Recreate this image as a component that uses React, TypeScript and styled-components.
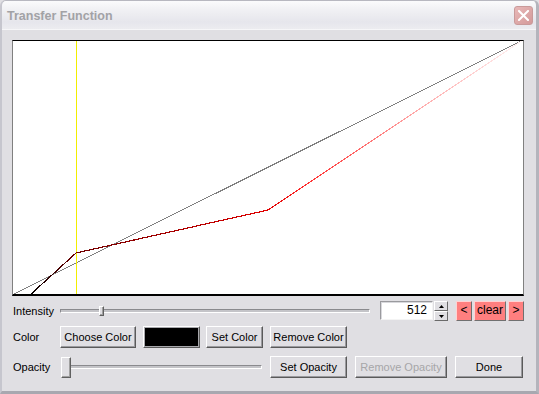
import React from "react";
import styled, { createGlobalStyle } from "styled-components";

const Global = createGlobalStyle`
  html, body { margin: 0; padding: 0; background: #e0dfe3; overflow: hidden; }
  body { width: 539px; height: 394px; font-family: "Liberation Sans", Arial, sans-serif; }
`;

const Window = styled.div`
  width: 539px;
  height: 394px;
  box-sizing: border-box;
  display: flex;
  flex-direction: column;
  background: #e0dfe3;
  border-left: 2px solid #c6c6ce;
  border-right: 3px solid #b4b4bc;
  border-bottom: 3px solid #a8a8b0;
  border-top: 1px solid #b8b8c0;
  border-radius: 6px 6px 0 0;
  overflow: hidden;
`;

const TitleBar = styled.div`
  height: 28px;
  flex: none;
  display: flex;
  align-items: center;
  justify-content: space-between;
  padding: 0 3px 0 5px;
  background: linear-gradient(#fbfbfc 0%, #f1f1f4 30%, #e6e6ec 75%, #ececf0 100%);
  border-bottom: 1px solid #f6f6f8;
`;

const Title = styled.span`
  font-family: "Liberation Sans", Arial, sans-serif;
  font-weight: bold;
  font-size: 12.5px;
  color: #a2a2a6;
  padding-top: 2px;
`;

const CloseButton = styled.div`
  width: 19px;
  height: 19px;
  box-sizing: border-box;
  border: 1px solid #c99a9a;
  border-radius: 3px;
  background: linear-gradient(135deg, #e8b8b8, #d49a9a);
  display: flex;
  align-items: center;
  justify-content: center;
  margin-top: 1px;
`;

const Body = styled.div`
  flex: 1;
  display: flex;
  flex-direction: column;
  padding: 10px 0 0 10px;
`;

const Plot = styled.div`
  width: 512px;
  height: 256px;
  box-sizing: border-box;
  background: #fff;
  border-top: 1px solid #000;
  border-bottom: 2px solid #000;
  border-left: 1px solid #808080;
  border-right: 1px solid #808080;
  overflow: hidden;
`;

const Row = styled.div<{ $h: number; $mt: number }>`
  display: flex;
  align-items: center;
  height: ${(p) => p.$h}px;
  margin-top: ${(p) => p.$mt}px;
`;

const Label = styled.span`
  width: 48px;
  flex: none;
  padding-left: 1px;
  box-sizing: border-box;
  font-size: 11px;
  color: #000;
`;

const Gap = styled.div<{ $w: number }>`
  width: ${(p) => p.$w}px;
  flex: none;
`;

const SliderBox = styled.div<{ $w: number; $h: number }>`
  position: relative;
  width: ${(p) => p.$w}px;
  height: ${(p) => p.$h}px;
  flex: none;
`;

const Track = styled.div<{ $l: number; $r: number }>`
  position: absolute;
  left: ${(p) => p.$l}px;
  right: ${(p) => p.$r}px;
  top: 50%;
  margin-top: -2px;
  height: 4px;
  box-sizing: border-box;
  border-top: 1px solid #8a8a8e;
  border-left: 1px solid #8a8a8e;
  border-bottom: 1px solid #ffffff;
  border-right: 1px solid #ffffff;
  background: #c4c4c8;
`;

const Thumb = styled.div<{ $w: number; $h: number }>`
  position: absolute;
  top: 50%;
  width: ${(p) => p.$w}px;
  height: ${(p) => p.$h}px;
  margin-top: ${(p) => -p.$h / 2}px;
  box-sizing: border-box;
  background: #e0dfe3;
  border-top: 1px solid #ffffff;
  border-left: 1px solid #ffffff;
  border-right: 1px solid #606060;
  border-bottom: 1px solid #606060;
  box-shadow: inset -1px -1px #a0a0a0;
`;

const Button = styled.button<{ $w: number; $disabled?: boolean }>`
  width: ${(p) => p.$w}px;
  height: 22px;
  flex: none;
  box-sizing: border-box;
  padding: 0;
  margin: 0;
  font-family: "Liberation Sans", Arial, sans-serif;
  font-size: 11px;
  color: ${(p) => (p.$disabled ? "#a6a6a8" : "#000")};
  background: #e0dfe3;
  border-style: solid;
  border-width: 1px;
  border-color: #fff #5a5a5a #5a5a5a #fff;
  box-shadow: inset -1px -1px #9a9a9e;
  outline: none;
  display: flex;
  align-items: center;
  justify-content: center;
`;

const RedButton = styled.button<{ $w: number }>`
  width: ${(p) => p.$w}px;
  height: 20px;
  flex: none;
  box-sizing: border-box;
  padding: 0 0 1px 0;
  margin: 0;
  font-family: "Liberation Sans", Arial, sans-serif;
  font-size: 12px;
  color: #000;
  background: #ff7f7f;
  border-style: solid;
  border-width: 1px;
  border-color: #ffd2d2 #707070 #707070 #ffd2d2;
  outline: none;
  display: flex;
  align-items: center;
  justify-content: center;
`;

const Swatch = styled.div`
  width: 57px;
  height: 22px;
  flex: none;
  box-sizing: border-box;
  border-style: solid;
  border-width: 1px;
  border-color: #fff #5a5a5a #5a5a5a #fff;
  padding: 1px;
  background: #a8a8ac;
  display: flex;
`;

const SwatchFill = styled.div<{ $c: string }>`
  flex: 1;
  background: ${(p) => p.$c};
`;

const TextField = styled.div`
  width: 53px;
  height: 19px;
  flex: none;
  box-sizing: border-box;
  background: #fff;
  border-style: solid;
  border-width: 1px;
  border-color: #9a9a9e #f4f4f4 #f4f4f4 #9a9a9e;
  box-shadow: inset 1px 1px #d8d8dc;
  font-size: 12px;
  text-align: right;
  padding-right: 5px;
  line-height: 17px;
  color: #000;
`;

const Spinner = styled.div`
  width: 14px;
  height: 20px;
  flex: none;
  display: flex;
  flex-direction: column;
  margin-left: 1px;
  margin-top: 1px;
`;

const SpinHalf = styled.div`
  flex: 1;
  box-sizing: border-box;
  background: #e0dfe3;
  border-style: solid;
  border-width: 1px;
  border-color: #fff #6a6a6a #6a6a6a #fff;
  display: flex;
  align-items: center;
  justify-content: center;
`;

const Slider: React.FC<{
  w: number;
  h: number;
  tl: number;
  tr: number;
  tw: number;
  th: number;
  pos: number;
}> = ({ w, h, tl, tr, tw, th, pos }) => (
  <SliderBox $w={w} $h={h}>
    <Track $l={tl} $r={tr} />
    <Thumb $w={tw} $h={th} style={{ left: pos }} />
  </SliderBox>
);

const Arrow: React.FC<{ up?: boolean }> = ({ up }) => (
  <svg width="5" height="3" viewBox="0 0 5 3">
    <path d={up ? "M2.5 0 L5 3 L0 3 Z" : "M0 0 L5 0 L2.5 3 Z"} fill="#000" />
  </svg>
);

const TransferPlot: React.FC = () => (
  <Plot>
    <svg width="510" height="253" viewBox="0 0 510 253" style={{ display: "block" }}>
      <defs>
        <linearGradient id="tf" gradientUnits="userSpaceOnUse" x1="17" y1="0" x2="510" y2="0">
          <stop offset="0" stopColor="#000000" />
          <stop offset="0.093" stopColor="#700000" />
          <stop offset="0.48" stopColor="#e00000" />
          <stop offset="0.56" stopColor="#ff3030" />
          <stop offset="0.78" stopColor="#ffa8a8" />
          <stop offset="1" stopColor="#fff4f4" />
        </linearGradient>
      </defs>
      <line x1="-1" y1="254" x2="510" y2="-1" stroke="#808080" strokeWidth="1" shapeRendering="crispEdges" />
      <rect x="63" y="0" width="1" height="253" fill="#f2ee00" />
      <polyline
        points="17,254 63,212 255,169 510,-1"
        fill="none"
        stroke="url(#tf)"
        strokeWidth="1.2"
        shapeRendering="crispEdges"
      />
    </svg>
  </Plot>
);

export default function App() {
  return (
    <>
      <Global />
      <Window>
        <TitleBar>
          <Title>Transfer Function</Title>
          <CloseButton>
            <svg width="11" height="11" viewBox="0 0 11 11">
              <path d="M1 1 L10 10 M10 1 L1 10" stroke="#fff" strokeWidth="2" strokeLinecap="square" />
            </svg>
          </CloseButton>
        </TitleBar>
        <Body>
          <TransferPlot />
          <Row $h={21} $mt={4}>
            <Label>Intensity</Label>
            <Slider w={310} h={21} tl={0} tr={0} tw={5} th={10} pos={39} />
            <Gap $w={10} />
            <TextField>512</TextField>
            <Spinner>
              <SpinHalf>
                <Arrow up />
              </SpinHalf>
              <SpinHalf>
                <Arrow />
              </SpinHalf>
            </Spinner>
            <Gap $w={8} />
            <RedButton $w={16}>&lt;</RedButton>
            <Gap $w={2} />
            <RedButton $w={32}>clear</RedButton>
            <Gap $w={2} />
            <RedButton $w={16}>&gt;</RedButton>
          </Row>
          <Row $h={22} $mt={5}>
            <Label>Color</Label>
            <Button $w={76}>Choose Color</Button>
            <Gap $w={7} />
            <Swatch>
              <SwatchFill $c="#000" />
            </Swatch>
            <Gap $w={6} />
            <Button $w={57}>Set Color</Button>
            <Gap $w={7} />
            <Button $w={77}>Remove Color</Button>
          </Row>
          <Row $h={22} $mt={8}>
            <Label>Opacity</Label>
            <Slider w={203} h={22} tl={2} tr={1} tw={10} th={21} pos={1} />
            <Gap $w={7} />
            <Button $w={77}>Set Opacity</Button>
            <Gap $w={8} />
            <Button $w={92} $disabled>
              Remove Opacity
            </Button>
            <Gap $w={8} />
            <Button $w={68}>Done</Button>
          </Row>
        </Body>
      </Window>
    </>
  );
}
